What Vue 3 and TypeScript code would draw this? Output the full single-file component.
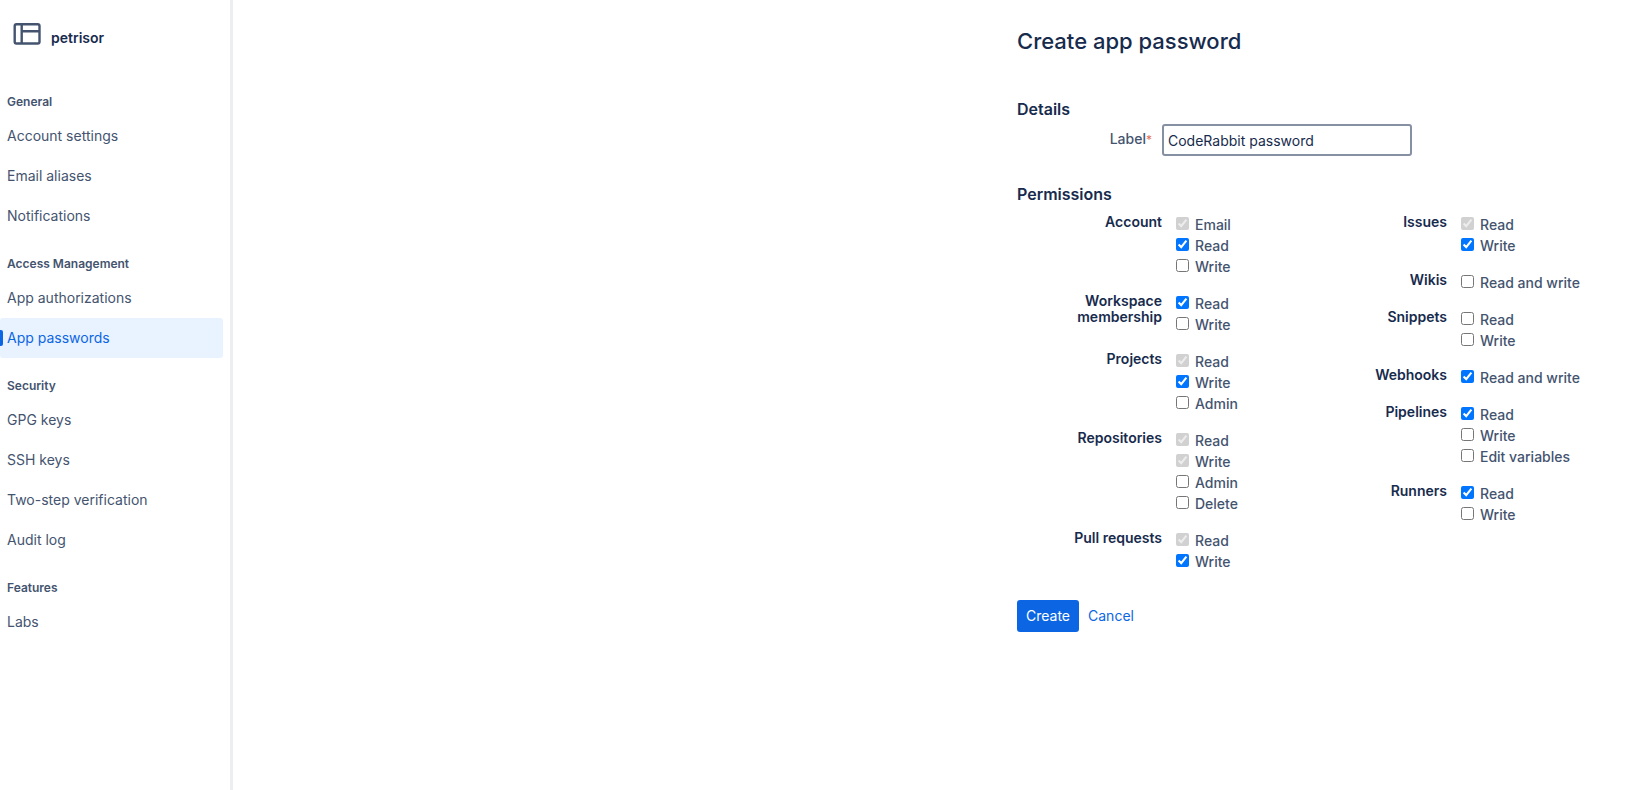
<script setup lang="ts">
import { ref } from 'vue'

interface NavItem {
  label: string
  active?: boolean
}
interface NavGroup {
  title: string
  items: NavItem[]
}
interface Scope {
  label: string
  checked: boolean
  disabled?: boolean
}
interface PermissionGroup {
  title: string
  scopes: Scope[]
}

const navGroups: NavGroup[] = [
  {
    title: 'General',
    items: [{ label: 'Account settings' }, { label: 'Email aliases' }, { label: 'Notifications' }],
  },
  {
    title: 'Access Management',
    items: [{ label: 'App authorizations' }, { label: 'App passwords', active: true }],
  },
  {
    title: 'Security',
    items: [
      { label: 'GPG keys' },
      { label: 'SSH keys' },
      { label: 'Two-step verification' },
      { label: 'Audit log' },
    ],
  },
  { title: 'Features', items: [{ label: 'Labs' }] },
]

const on = (label: string): Scope => ({ label, checked: true })
const off = (label: string): Scope => ({ label, checked: false })
const implied = (label: string): Scope => ({ label, checked: true, disabled: true })

const columns = ref<PermissionGroup[][]>([
  [
    { title: 'Account', scopes: [implied('Email'), on('Read'), off('Write')] },
    { title: 'Workspace membership', scopes: [on('Read'), off('Write')] },
    { title: 'Projects', scopes: [implied('Read'), on('Write'), off('Admin')] },
    { title: 'Repositories', scopes: [implied('Read'), implied('Write'), off('Admin'), off('Delete')] },
    { title: 'Pull requests', scopes: [implied('Read'), on('Write')] },
  ],
  [
    { title: 'Issues', scopes: [implied('Read'), on('Write')] },
    { title: 'Wikis', scopes: [off('Read and write')] },
    { title: 'Snippets', scopes: [off('Read'), off('Write')] },
    { title: 'Webhooks', scopes: [on('Read and write')] },
    { title: 'Pipelines', scopes: [on('Read'), off('Write'), off('Edit variables')] },
    { title: 'Runners', scopes: [on('Read'), off('Write')] },
  ],
])

const label = ref('CodeRabbit password')
</script>

<template>
  <div class="page">
    <aside class="sidebar">
      <header class="brand">
        <svg class="brand-icon" viewBox="0 0 28 22" aria-hidden="true">
          <rect x="1.7" y="1.3" width="24.8" height="19.2" rx="1.8" />
          <path d="M8.7 1.3v19.2M8.7 8.2h17.8" />
        </svg>
        <span class="brand-name">petrisor</span>
      </header>
      <nav>
        <section v-for="group in navGroups" :key="group.title">
          <h2 class="nav-title">{{ group.title }}</h2>
          <a
            v-for="item in group.items"
            :key="item.label"
            href="#"
            class="nav-link"
            :class="{ active: item.active }"
            :aria-current="item.active ? 'page' : undefined"
          >{{ item.label }}</a>
        </section>
      </nav>
    </aside>

    <main class="main">
      <form class="form" @submit.prevent>
        <h1>Create app password</h1>

        <h3>Details</h3>
        <div class="field">
          <label class="field-label" for="password-label">Label<span class="required">*</span></label>
          <input id="password-label" v-model="label" class="text-input" type="text" />
        </div>

        <h3 class="permissions-title">Permissions</h3>
        <div class="columns">
          <div v-for="(column, c) in columns" :key="c" class="column">
            <div
              v-for="group in column"
              :key="group.title"
              class="permission"
              role="group"
              :aria-label="group.title"
            >
              <span class="permission-title">{{ group.title }}</span>
              <div class="scopes">
                <label v-for="scope in group.scopes" :key="scope.label" class="scope">
                  <input v-model="scope.checked" type="checkbox" :disabled="scope.disabled" />
                  <span>{{ scope.label }}</span>
                </label>
              </div>
            </div>
          </div>
        </div>

        <div class="actions">
          <button class="create" type="submit">Create</button>
          <a class="cancel" href="#">Cancel</a>
        </div>
      </form>
    </main>
  </div>
</template>

<style>
body {
  background: #fff;
}
</style>

<style scoped>
.page,
.page * {
  box-sizing: border-box;
}
.page {
  display: flex;
  min-height: 100vh;
  color: #172b4d;
  font: 400 14px/20px Inter, Roboto, sans-serif;
}
.sidebar {
  flex: 0 0 233px;
  border-right: 3px solid #edeef3;
}
.brand {
  display: flex;
  gap: 10px;
  height: 74px;
  padding: 23px 0 0 13px;
}
.brand-icon {
  width: 28px;
  height: 22px;
  fill: none;
  stroke: #44546f;
  stroke-width: 2.4;
}
.brand-name {
  margin-top: 5px;
  font-weight: 600;
}
.nav-title {
  margin: 0;
  padding: 20px 7px 6px;
  color: #44546f;
  font-size: 12px;
  font-weight: 600;
  line-height: 16px;
}
.nav-link {
  display: flex;
  align-items: center;
  height: 40px;
  margin-right: 7px;
  padding-left: 7px;
  border-radius: 3px;
  color: #44546f;
  text-decoration: none;
}
.nav-link.active {
  background: #e9f2ff;
  color: #0c66e4;
}
.nav-link.active::before {
  width: 3px;
  height: 16px;
  margin: 0 4px 0 -7px;
  border-radius: 0 2px 2px 0;
  background: #0c66e4;
  content: '';
}
.main {
  display: flex;
  flex: 1;
  justify-content: flex-end;
  padding: 27px 28px 40px;
}
.form {
  width: 600px;
}
h1 {
  margin: 0;
  font-size: 22px;
  font-weight: 500;
  line-height: 28px;
}
h3 {
  margin: 44px 0 0;
  font-size: 16px;
  font-weight: 600;
  line-height: 20px;
}
.field {
  display: flex;
  gap: 10px;
  margin-top: 5px;
}
.field-label {
  width: 135px;
  padding-top: 5px;
  color: #44546f;
  font-weight: 500;
  text-align: right;
}
.required {
  color: #e2705a;
  font-size: 12px;
  font-weight: 400;
}
.text-input {
  width: 250px;
  height: 32px;
  padding: 0 4px;
  border: 2px solid #8590a2;
  border-radius: 3px;
  background: #fff;
  color: #172b4d;
  font: inherit;
}
.permissions-title {
  margin-top: 28px;
}
.columns {
  display: flex;
  margin-top: 10px;
}
.column {
  display: flex;
  flex: 0 0 285px;
  flex-direction: column;
  gap: 16px;
}
.permission {
  display: flex;
  gap: 14px;
}
.permission-title {
  width: 145px;
  padding-left: 40px;
  font-weight: 600;
  line-height: 16px;
  text-align: right;
}
.scope {
  display: flex;
  gap: 6px;
  height: 21px;
  color: #44546f;
  font-weight: 500;
}
.scope input {
  width: 13px;
  height: 13px;
  margin: 3px 0 0;
}
.scope span {
  padding-top: 1px;
}
.actions {
  display: flex;
  gap: 9px;
  align-items: center;
  margin-top: 28px;
}
.create {
  height: 32px;
  padding: 0 9px;
  border: 0;
  border-radius: 3px;
  background: #0c66e4;
  color: #fff;
  font: inherit;
}
.cancel {
  color: #0c66e4;
  text-decoration: none;
}
</style>
